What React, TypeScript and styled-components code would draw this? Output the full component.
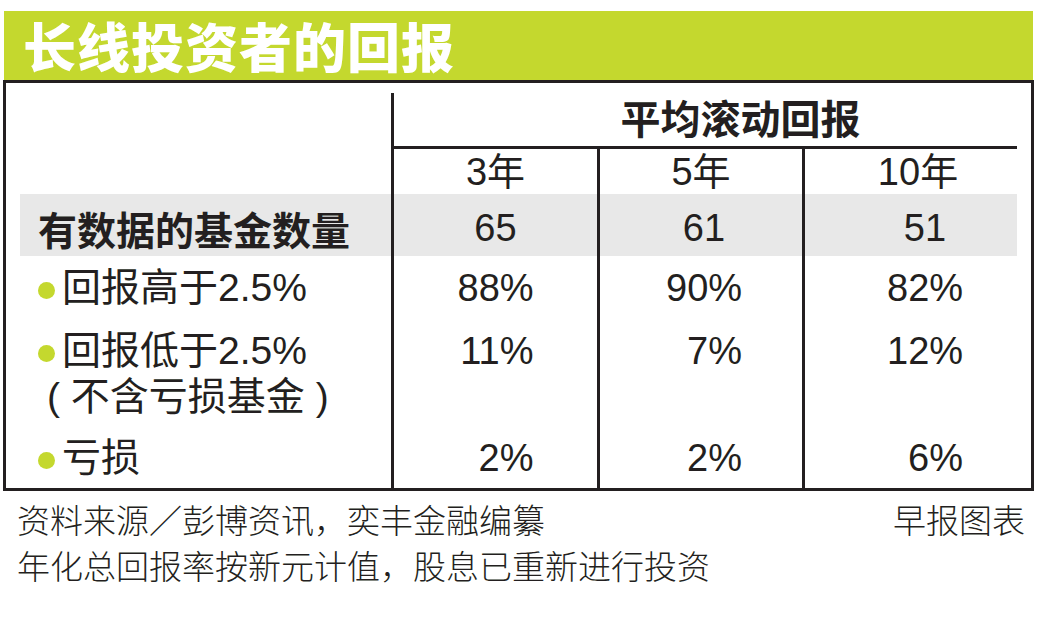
import React from "react";
import styled, { createGlobalStyle } from "styled-components";

const GlobalStyle = createGlobalStyle`
  html, body { margin: 0; padding: 0; background: #ffffff; }
  body {
    font-family: "Liberation Sans", "Noto Sans CJK SC", sans-serif;
    color: #231f20;
  }
`;

const INK = "#231f20";
const GREEN = "#c4d82e";
const SHADE = "#e8e8e8";

const Page = styled.div`
  width: 1039px;
  height: 643px;
  box-sizing: border-box;
  padding: 11px 0 0 3px;
  overflow: hidden;
`;

const Chart = styled.div`
  width: 1031px;
`;

const TitleBar = styled.div`
  margin: 0 1px;
  height: 69px;
  box-sizing: border-box;
  padding: 0 0 0 19px;
  display: flex;
  align-items: center;
  background: ${GREEN};
  color: #ffffff;
  font-family: "Noto Sans CJK SC", sans-serif;
  font-weight: 900;
  font-size: 53px;
  letter-spacing: 1px;
  line-height: 1;
`;

const Table = styled.div`
  border: 3px solid ${INK};
  display: flex;
  flex-direction: column;
`;

const Row = styled.div<{ $h: number; $pt?: number; $shaded?: boolean }>`
  display: grid;
  grid-template-columns: 385px 206px 205px 229px;
  height: ${(p) => p.$h}px;
  background: ${(p) =>
    p.$shaded
      ? `linear-gradient(${SHADE}, ${SHADE}) 14px 0 / calc(100% - 28px) 100% no-repeat`
      : "transparent"};
  & > * {
    padding-top: ${(p) => p.$pt ?? 0}px;
  }
`;

const LabelCell = styled.div<{ $bold?: boolean }>`
  box-sizing: border-box;
  padding-left: 32px;
  font-size: 39px;
  line-height: 46px;
  font-family: ${(p) =>
    p.$bold ? `"Noto Sans CJK SC", sans-serif` : `"Liberation Sans", "Noto Sans CJK SC", sans-serif`};
  font-weight: ${(p) => (p.$bold ? 700 : 400)};
  white-space: pre;
`;

const BulletLine = styled.div`
  display: flex;
  align-items: center;
`;

const Bullet = styled.span`
  flex: none;
  width: 17px;
  height: 17px;
  border-radius: 50%;
  background: ${GREEN};
  margin: 4px 7px 0 0;
`;

const SubLine = styled.div`
  margin-left: 9px;
`;

const GroupHead = styled.div`
  grid-column: 2 / 5;
  margin: 10px 14px 0 0;
  height: 56px;
  box-sizing: border-box;
  border-left: 3px solid ${INK};
  border-bottom: 3px solid ${INK};
  padding-left: 70px;
  text-align: center;
  font-family: "Noto Sans CJK SC", sans-serif;
  font-weight: 700;
  font-size: 40px;
  line-height: 48px;
`;

const YearCell = styled.div`
  border-left: 3px solid ${INK};
  text-align: center;
  font-size: 38px;
  line-height: 46px;
`;

const ValueCell = styled.div<{ $nudge?: number }>`
  box-sizing: border-box;
  border-left: 3px solid ${INK};
  padding-left: ${(p) => p.$nudge ?? 0}px;
  display: flex;
  justify-content: center;
  align-items: flex-start;
  font-size: 38px;
  line-height: 46px;
`;

const Num = styled.span`
  display: block;
  width: 76px;
  text-align: right;
`;

const Count = styled.span`
  display: block;
`;

const Footer = styled.div`
  margin-top: 5px;
  padding: 0 9px 0 14px;
  font-family: "Noto Sans CJK SC", sans-serif;
  font-weight: 300;
  font-size: 33px;
  line-height: 46px;
`;

const FooterLine = styled.div`
  display: flex;
  justify-content: space-between;
  white-space: nowrap;
`;

const nudges = [0, 6, 14];

type DataRow = {
  label: React.ReactNode;
  values: string[];
  h: number;
  pt: number;
};

const rows: DataRow[] = [
  {
    label: (
      <BulletLine>
        <Bullet />
        回报高于2.5%
      </BulletLine>
    ),
    values: ["88%", "90%", "82%"],
    h: 64,
    pt: 9,
  },
  {
    label: (
      <>
        <BulletLine>
          <Bullet />
          回报低于2.5%
        </BulletLine>
        <SubLine>( 不含亏损基金 )</SubLine>
      </>
    ),
    values: ["11%", "7%", "12%"],
    h: 100,
    pt: 8,
  },
  {
    label: (
      <BulletLine>
        <Bullet />
        亏损
      </BulletLine>
    ),
    values: ["2%", "2%", "6%"],
    h: 68,
    pt: 15,
  },
];

export default function App() {
  return (
    <Page>
      <GlobalStyle />
      <Chart>
        <TitleBar>长线投资者的回报</TitleBar>
        <Table>
          <Row $h={66}>
            <div />
            <GroupHead>平均滚动回报</GroupHead>
          </Row>
          <Row $h={45}>
            <div />
            <YearCell>3年</YearCell>
            <YearCell>5年</YearCell>
            <YearCell>10年</YearCell>
          </Row>
          <Row $h={62} $pt={11} $shaded>
            <LabelCell $bold>有数据的基金数量</LabelCell>
            {["65", "61", "51"].map((v, i) => (
              <ValueCell key={i} $nudge={nudges[i]}>
                <Count>{v}</Count>
              </ValueCell>
            ))}
          </Row>
          {rows.map((r, ri) => (
            <Row key={ri} $h={r.h} $pt={r.pt}>
              <LabelCell>{r.label}</LabelCell>
              {r.values.map((v, i) => (
                <ValueCell key={i} $nudge={nudges[i]}>
                  <Num>{v}</Num>
                </ValueCell>
              ))}
            </Row>
          ))}
        </Table>
        <Footer>
          <FooterLine>
            <span>资料来源／彭博资讯，奕丰金融编纂</span>
            <span>早报图表</span>
          </FooterLine>
          <FooterLine>
            <span>年化总回报率按新元计值，股息已重新进行投资</span>
          </FooterLine>
        </Footer>
      </Chart>
    </Page>
  );
}
